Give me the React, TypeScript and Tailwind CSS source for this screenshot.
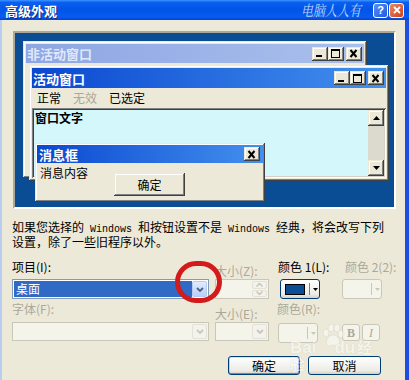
import React from "react";

const cjk = "font-['Noto_Sans_CJK_SC','Noto_Sans',sans-serif]";
const raised =
  "shadow-[inset_-1px_-1px_0_#404040,inset_1px_1px_0_#ece9d8,inset_-2px_-2px_0_#808080,inset_2px_2px_0_#ffffff]";
const sunken =
  "shadow-[inset_1px_1px_0_#808080,inset_-1px_-1px_0_#ffffff,inset_2px_2px_0_#404040,inset_-2px_-2px_0_#d4d0c8]";

function CapBtn({ kind }: { kind: "min" | "max" | "close" }) {
  return (
    <div className={`w-[16px] h-[14px] bg-[#ece9d8] ${raised} flex items-center justify-center`}>
      <svg width="10" height="9" viewBox="0 0 10 9">
        {kind === "min" && <rect x="1" y="6" width="6" height="2" fill="#000" />}
        {kind === "max" && (
          <g fill="none" stroke="#000" strokeWidth="1">
            <rect x="0.5" y="0.5" width="8" height="8" />
            <line x1="0.5" y1="1.5" x2="8.5" y2="1.5" />
          </g>
        )}
        {kind === "close" && <path d="M1.5 1l6 7M7.5 1l-6 7" stroke="#000" strokeWidth="2" />}
      </svg>
    </div>
  );
}

function CapButtons() {
  return (
    <div className="flex items-center">
      <CapBtn kind="min" />
      <CapBtn kind="max" />
      <div className="w-[2px]" />
      <CapBtn kind="close" />
    </div>
  );
}

function Chevron({ color }: { color: string }) {
  return (
    <svg width="8" height="5" viewBox="0 0 8 5">
      <path d="M1 1l3 3 3-3" fill="none" stroke={color} strokeWidth="1.8" />
    </svg>
  );
}

function DropBtn({ disabled }: { disabled?: boolean }) {
  return (
    <div
      className={`w-[15px] h-full rounded-[2px] border flex items-center justify-center ${
        disabled
          ? "border-[#e4e2d6] bg-[#f3f2ec]"
          : "border-[#b5c9f3] bg-[linear-gradient(to_bottom,#e2ebfe,#b9cff8)]"
      }`}
    >
      <Chevron color={disabled ? "#c9c7ba" : "#4d6185"} />
    </div>
  );
}

function ColorBtn({ disabled, swatch }: { disabled?: boolean; swatch?: string }) {
  return (
    <div
      className={`w-[40px] h-[20px] rounded-[3px] border flex items-center pl-[4px] ${
        disabled
          ? "border-[#c9c7ba] bg-[#f5f4ea]"
          : "border-[#003c74] bg-[linear-gradient(to_bottom,#ffffff,#ecebe6_80%,#d6d0c5)]"
      }`}
    >
      <div
        className={`w-[20px] h-[11px] ${swatch ? "border border-black" : ""}`}
        style={swatch ? { background: swatch } : undefined}
      />
      <div className={`ml-[4px] w-px h-[12px] ${disabled ? "bg-[#c9c7ba]" : "bg-[#808080]"}`} />
      <svg className="ml-[3px]" width="5" height="3" viewBox="0 0 5 3">
        <path d="M0 0h5l-2.5 3z" fill={disabled ? "#c9c7ba" : "#000"} />
      </svg>
    </div>
  );
}

export default function App() {
  return (
    <div className={`w-[409px] h-[380px] bg-[#ece9d8] flex flex-col overflow-hidden relative ${cjk} text-[12px] text-black`}>
      {/* title bar */}
      <div className="h-[20px] flex items-center pl-[5px] pr-[5px] bg-[linear-gradient(to_bottom,#3d95ff_0%,#0a5ff0_12%,#0054e8_50%,#0a5cf0_85%,#0043d0_100%)]">
        <span className="text-white font-bold text-[13px] leading-none [text-shadow:1px_1px_0_#0a2a8a]">高级外观</span>
        <div className="flex-1" />
        <span className="text-[#cfe0ff] text-[12px] italic leading-none scale-y-125 opacity-90 mr-[12px] font-['Noto_Serif_CJK_SC','Noto_Sans_CJK_SC',serif]">
          电脑人人有
        </span>
        <div className="flex gap-[1px]">
          <div className="w-[15px] h-[15px] rounded-[3px] border border-white bg-[linear-gradient(135deg,#5a8ff5,#1e5ae0)] flex items-center justify-center text-white text-[11px] font-bold leading-none font-['Liberation_Sans',sans-serif]">
            ?
          </div>
          <div className="w-[15px] h-[15px] rounded-[3px] border border-white bg-[linear-gradient(135deg,#e88a6a,#d0401a)] flex items-center justify-center">
            <svg width="8" height="8" viewBox="0 0 8 8">
              <path d="M1 1l6 6M7 1l-6 6" stroke="#fff" strokeWidth="1.8" />
            </svg>
          </div>
        </div>
      </div>

      <div className="flex-1 flex">
        <div className="w-[2px] bg-[#b9cdf2]" />
        <div className="flex-1 flex flex-col">
          {/* preview */}
          <div className="ml-[11px] mt-[11px] w-[383px] h-[178px] border-2 border-t-[#aca899] border-l-[#aca899] border-r-white border-b-white">
            <div className="relative w-full h-full bg-[#0a4d94]">
              {/* inactive window */}
              <div className={`absolute left-[8px] top-[8px] w-[344px] h-[137px] bg-[#ece9d8] p-[3px] ${raised}`}>
                <div className="h-[19px] flex items-center pl-[1px] pr-[2px] bg-[linear-gradient(to_right,#8ea6e4,#a9c0ec)]">
                  <span className="flex-1 text-[#dfe7f8] font-bold text-[13px] leading-none">非活动窗口</span>
                  <CapButtons />
                </div>
              </div>

              {/* active window */}
              <div className={`absolute left-[14px] top-[32px] w-[360px] h-[116px] bg-[#ece9d8] p-[3px] flex flex-col ${raised}`}>
                <div className="h-[20px] flex items-center pl-[1px] pr-[2px] bg-[linear-gradient(to_right,#0a48d0,#4390ee)]">
                  <span className="flex-1 text-white font-bold text-[13px] leading-none">活动窗口</span>
                  <CapButtons />
                </div>
                <div className="h-[20px] flex items-center gap-[12px] pl-[5px]">
                  <span>正常</span>
                  <span className="text-[#aca899]">无效</span>
                  <span>已选定</span>
                </div>
                <div className={`flex-1 flex p-[2px] bg-[#d4f7fc] ${sunken}`}>
                  <div className="flex-1 pl-[1px] pt-[1px] font-bold text-[12px] leading-[13px]">窗口文字</div>
                  <div className="w-[16px] flex flex-col bg-[#dcd9cf]">
                    <div className={`h-[16px] bg-[#ece9d8] ${raised} flex items-center justify-center`}>
                      <svg width="7" height="4" viewBox="0 0 7 4">
                        <path d="M0 4h7L3.5 0z" fill="#000" />
                      </svg>
                    </div>
                    <div className="flex-1" />
                    <div className={`h-[16px] bg-[#ece9d8] ${raised} flex items-center justify-center`}>
                      <svg width="7" height="4" viewBox="0 0 7 4">
                        <path d="M0 0h7L3.5 4z" fill="#000" />
                      </svg>
                    </div>
                  </div>
                </div>
              </div>

              {/* message box */}
              <div className={`absolute left-[20px] top-[110px] w-[230px] h-[59px] bg-[#ece9d8] p-[2px] flex flex-col ${raised}`}>
                <div className="h-[18px] flex items-center pl-[2px] pr-[3px] bg-[linear-gradient(to_right,#0a48d0,#4390ee)]">
                  <span className="flex-1 text-white font-bold text-[13px] leading-none">消息框</span>
                  <CapBtn kind="close" />
                </div>
                <div className="flex items-start pl-[3px]">
                  <span className="mt-[3px] leading-[13px]">消息内容</span>
                  <div className={`ml-[26px] mt-[10px] w-[71px] h-[23px] bg-[#ece9d8] ${raised} flex items-center justify-center`}>
                    确定
                  </div>
                </div>
              </div>
            </div>
          </div>

          {/* description */}
          <div className="mt-[12px] pl-[10px] leading-[12px]">
            <div>
              如果您选择的<span className="font-['Liberation_Mono',monospace] text-[10px] whitespace-pre"> Windows </span>和按钮设置不是<span className="font-['Liberation_Mono',monospace] text-[10px] whitespace-pre"> Windows </span>经典，将会改写下列
            </div>
            <div>设置，除了一些旧程序以外。</div>
          </div>

          {/* row 1 labels */}
          <div className="mt-[13px] pl-[10px] flex h-[14px] leading-[12px]">
            <span className="w-[203px]">项目(I):</span>
            <span className="w-[63px] pt-[4px] text-[#aca899]">大小(Z):</span>
            <span className="w-[67px]">颜色 1(L):</span>
            <span className="text-[#aca899]">颜色 2(2):</span>
          </div>

          {/* row 1 controls */}
          <div className="mt-[4px] pl-[10px] flex h-[20px]">
            <div className="w-[197px] h-[20px] border border-[#7f9db9] bg-white p-[1px] flex">
              <div className="flex-1 bg-[#316ac5] text-white pl-[2px] leading-[16px]">桌面</div>
              <DropBtn />
            </div>
            <div className="ml-[6px] w-[54px] h-[20px] border border-[#c9c7ba] bg-[#f5f4ea] p-[1px] flex justify-end">
              <div className="w-[15px] h-full flex flex-col gap-px">
                <div className="flex-1 rounded-[2px] border border-[#e4e2d6] bg-[#f3f2ec] flex items-center justify-center">
                  <svg width="7" height="4" viewBox="0 0 7 4"><path d="M0.5 3.5l3-3 3 3" fill="none" stroke="#c9c7ba" strokeWidth="1.5" /></svg>
                </div>
                <div className="flex-1 rounded-[2px] border border-[#e4e2d6] bg-[#f3f2ec] flex items-center justify-center">
                  <svg width="7" height="4" viewBox="0 0 7 4"><path d="M0.5 0.5l3 3 3-3" fill="none" stroke="#c9c7ba" strokeWidth="1.5" /></svg>
                </div>
              </div>
            </div>
            <div className="ml-[11px]">
              <ColorBtn swatch="#0a4d94" />
            </div>
            <div className="ml-[22px]">
              <ColorBtn disabled />
            </div>
          </div>

          {/* row 2 labels */}
          <div className="mt-[4px] pl-[10px] flex h-[14px] leading-[12px] text-[#aca899]">
            <span className="w-[203px]">字体(F):</span>
            <span className="w-[62px] pt-[5px]">大小(E):</span>
            <span>颜色(R):</span>
          </div>

          {/* row 2 controls */}
          <div className="mt-[5px] pl-[10px] flex h-[19px] items-start">
            <div className="w-[197px] h-[19px] border border-[#c9c7ba] bg-[#f5f4ea] p-[1px] flex justify-end">
              <DropBtn disabled />
            </div>
            <div className="ml-[6px] w-[54px] h-[19px] border border-[#c9c7ba] bg-[#f5f4ea] p-[1px] flex justify-end">
              <DropBtn disabled />
            </div>
            <div className="ml-[9px] mt-[1px]">
              <ColorBtn disabled />
            </div>
            <div className="ml-[24px] mt-[2px] w-[18px] h-[17px] rounded-[3px] border border-[#c9c7ba] bg-[#f5f4ea] flex items-center justify-center text-[#aca899] font-bold text-[12px] leading-none font-['Liberation_Serif',serif]">
              B
            </div>
            <div className="ml-[2px] mt-[2px] w-[18px] h-[17px] rounded-[3px] border border-[#c9c7ba] bg-[#f5f4ea] flex items-center justify-center text-[#aca899] italic text-[12px] leading-none font-['Liberation_Serif',serif]">
              I
            </div>
          </div>

          {/* buttons */}
          <div className="mt-[15px] pl-[226px] flex gap-[8px]">
            <div className="w-[72px] h-[19px] rounded-[3px] border border-[#003c74] bg-[linear-gradient(to_bottom,#ffffff,#ecebe6_80%,#d6d0c5)] shadow-[inset_0_1px_0_#cee7ff,inset_0_-1px_0_#6982ee,inset_1px_0_0_#b9d1fa,inset_-1px_0_0_#8aa8f0] flex items-center justify-center leading-none">
              确定
            </div>
            <div className="w-[73px] h-[19px] rounded-[3px] border border-[#003c74] bg-[linear-gradient(to_bottom,#ffffff,#ecebe6_80%,#d6d0c5)] flex items-center justify-center leading-none">
              取消
            </div>
          </div>
        </div>
        <div className="w-[4px] bg-[#1c4fe0]" />
      </div>

      {/* red annotation circle */}
      <div className="absolute left-[175px] top-[261px] w-[47px] h-[42px] rounded-full border-[5px] border-[#d41b1b]" />

      {/* watermark */}
      <div className="absolute left-[290px] top-[324px] w-[90px] h-[40px] opacity-50 pointer-events-none">
        <svg className="absolute left-[30px] top-0" width="26" height="24" viewBox="0 0 26 24">
          <g fill="#ffffff" stroke="#c9c7ba" strokeWidth="0.6">
            <ellipse cx="6" cy="9" rx="3" ry="4" />
            <ellipse cx="11" cy="4" rx="3" ry="4" />
            <ellipse cx="17" cy="4" rx="3" ry="4" />
            <ellipse cx="21" cy="10" rx="3" ry="4" />
            <path d="M13 11c5 0 8 6 6 10-2 2-4 0-6 0s-4 2-6 0c-2-4 1-10 6-10z" />
          </g>
        </svg>
        <div className="absolute left-0 top-[15px] text-white text-[17px] font-bold leading-none font-['Liberation_Sans',sans-serif] [text-shadow:0_0_1px_#b0ae9f]">
          Bai<span className="ml-[18px]">du</span>
          <span className={`ml-[2px] text-[15px] ${cjk}`}>经验</span>
        </div>
      </div>
    </div>
  );
}
